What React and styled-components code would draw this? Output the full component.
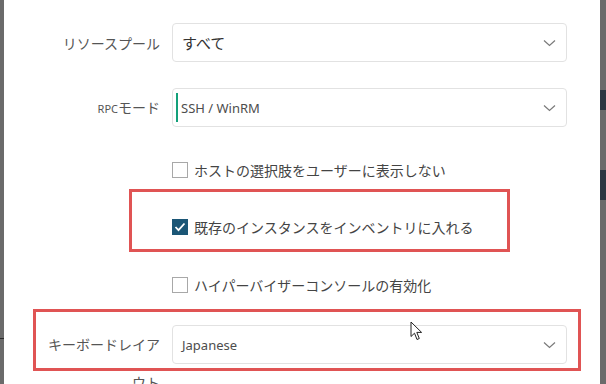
import React from 'react'
import styled, { createGlobalStyle } from 'styled-components'

const GlobalStyle = createGlobalStyle`
html, body {
  margin: 0;
  padding: 0;
  background: #6b6b6b;
}
body {
  font-family: "Noto Sans", "Noto Sans CJK JP", sans-serif;
}
`;

const Screen = styled.div`
display: flex;
flex-direction: row;
width: 606px;
height: 384px;
overflow: hidden;
`;

const SideStrip = styled.div`
display: flex;
flex-direction: column;
width: ${props => props.width}px;
flex-shrink: 0;
background-color: #6b6b6b;
`;

const StripBar = styled.div`
height: ${props => props.height}px;
margin-top: ${props => props.top}px;
background-color: ${props => props.color};
`;

const Modal = styled.div`
position: relative;
flex: 1;
display: flex;
flex-direction: column;
background-color: #ffffff;
padding: 23px 0 0 36px;
`;

const FormRow = styled.div`
display: grid;
grid-template-columns: 120px 395px;
column-gap: 12px;
align-items: ${props => props.top ? 'start' : 'center'};
margin-top: ${props => props.gap || 0}px;
`;

const Label = styled.div`
text-align: right;
font-family: "Noto Sans CJK JP", sans-serif;
font-size: 14px;
color: #555555;
line-height: ${props => props.lineHeight || 20}px;
`;

const Small = styled.span`
font-family: "Noto Sans", sans-serif;
font-size: 11px;
`;

const Select = styled.div`
display: flex;
flex-direction: row;
align-items: center;
height: 39px;
box-sizing: border-box;
border: 1px solid #e2e2e2;
border-radius: 4px;
padding: 0 10px 0 ${props => props.caret ? 3 : 9}px;
gap: 3px;
`;

const Caret = styled.div`
width: 2px;
height: 29px;
background-color: #13a07a;
`;

const Value = styled.div`
flex: 1;
font-family: "Noto Sans", "Noto Sans CJK JP", sans-serif;
font-size: ${props => props.size || 13}px;
color: ${props => props.size ? '#333333' : '#4d4d4d'};
`;

const CheckRow = styled.div`
display: flex;
flex-direction: row;
align-items: center;
gap: 6px;
height: 20px;
margin-left: 132px;
margin-top: ${props => props.gap}px;
`;

const Box = styled.div`
display: flex;
align-items: center;
justify-content: center;
width: 16px;
height: 16px;
box-sizing: border-box;
border: 1px solid ${props => props.checked ? '#1b5676' : '#a8a8a8'};
background-color: ${props => props.checked ? '#1b5676' : '#ffffff'};
`;

const CheckText = styled.div`
font-family: "Noto Sans CJK JP", sans-serif;
font-size: 14px;
color: #444444;
`;

const Highlight = styled.div`
position: absolute;
left: ${props => props.x}px;
top: ${props => props.y}px;
width: ${props => props.w}px;
height: ${props => props.h}px;
box-sizing: border-box;
border: 3px solid #e05454;
pointer-events: none;
`;

const Pointer = styled.svg`
position: absolute;
left: 406px;
top: 321px;
`;

const Chevron = () => (
  <svg width="13" height="8" viewBox="0 0 13 8">
    <path d="M1 1.5 L6.5 6.5 L12 1.5" fill="none" stroke="#7a7a7a" strokeWidth="1.2" />
  </svg>
);

const Check = () => (
  <svg width="12" height="10" viewBox="0 0 12 10">
    <path d="M1.5 5 L4.5 8.2 L10.5 1.5" fill="none" stroke="#ffffff" strokeWidth="1.8" />
  </svg>
);

const Checkbox = ({ checked, gap, children }) => (
  <CheckRow gap={gap}>
    <Box checked={checked}>{checked && <Check />}</Box>
    <CheckText>{children}</CheckText>
  </CheckRow>
);

const App = () => {
  return (
    <Screen>
      <GlobalStyle />
      <SideStrip width={4}>
        <StripBar top={338} height={1} color="#2a2a2a" />
      </SideStrip>
      <Modal>
        <FormRow>
          <Label>リソースプール</Label>
          <Select>
            <Value size={15}>すべて</Value>
            <Chevron />
          </Select>
        </FormRow>
        <FormRow gap={26}>
          <Label><Small>RPC</Small>モード</Label>
          <Select caret>
            <Caret />
            <Value>SSH / WinRM</Value>
            <Chevron />
          </Select>
        </FormRow>
        <Checkbox gap={33}>ホストの選択肢をユーザーに表示しない</Checkbox>
        <Checkbox checked gap={37}>既存のインスタンスをインベントリに入れる</Checkbox>
        <Checkbox gap={38}>ハイパーバイザーコンソールの有効化</Checkbox>
        <FormRow top gap={30}>
          <Label lineHeight={38}>キーボードレイアウト</Label>
          <Select>
            <Value>Japanese</Value>
            <Chevron />
          </Select>
        </FormRow>
        <Highlight x={125} y={189} w={381} h={63} />
        <Highlight x={29} y={309} w={548} h={62} />
        <Pointer width="13" height="20" viewBox="0 0 13 20">
          <path d="M1 1 L1 15.5 L4.5 12.2 L7 18.5 L9.3 17.5 L6.8 11.4 L11.6 11.4 Z" fill="#ffffff" stroke="#222222" strokeWidth="1" strokeLinejoin="round" />
        </Pointer>
      </Modal>
      <SideStrip width={6}>
        <StripBar top={90} height={20} color="#2c3642" />
        <StripBar top={60} height={30} color="#2c3642" />
      </SideStrip>
    </Screen>
  )
}

export default App
